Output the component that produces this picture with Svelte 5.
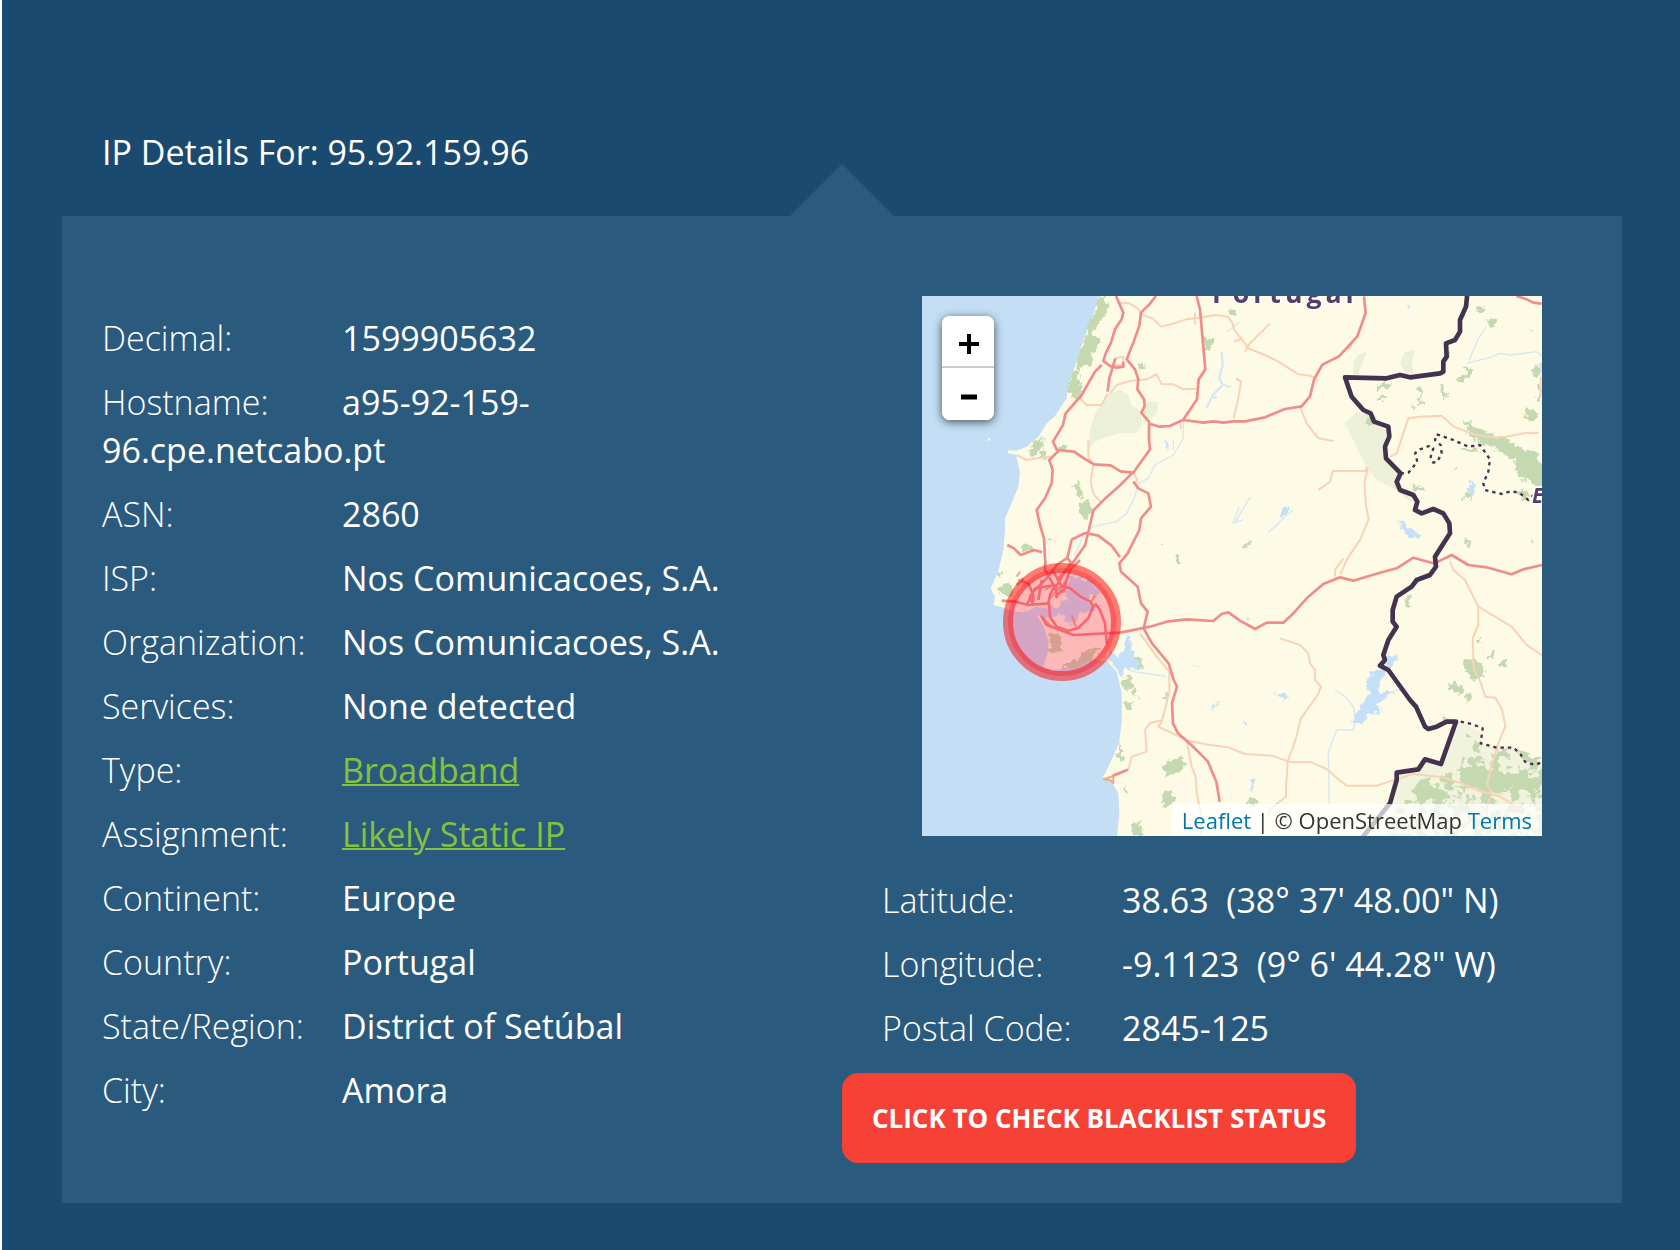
<script>
  const ip = '95.92.159.96';

  const details = [
    { label: 'Decimal', value: '1599905632' },
    { label: 'Hostname', value: 'a95-92-159-96.cpe.netcabo.pt' },
    { label: 'ASN', value: '2860' },
    { label: 'ISP', value: 'Nos Comunicacoes, S.A.' },
    { label: 'Organization', value: 'Nos Comunicacoes, S.A.' },
    { label: 'Services', value: 'None detected' },
    { label: 'Type', value: 'Broadband', href: '#broadband' },
    { label: 'Assignment', value: 'Likely Static IP', href: '#static' },
    { label: 'Continent', value: 'Europe' },
    { label: 'Country', value: 'Portugal' },
    { label: 'State/Region', value: 'District of Setúbal' },
    { label: 'City', value: 'Amora' }
  ];

  const position = [
    { label: 'Latitude', value: `38.63\u00a0 (38° 37' 48.00" N)` },
    { label: 'Longitude', value: `-9.1123\u00a0 (9° 6' 44.28" W)` },
    { label: 'Postal Code', value: '2845-125' }
  ];
</script>

{#snippet rows(items)}
  {#each items as item}
    <div class="row">
      <dt>{item.label}:</dt><dd>{#if item.href}<a href={item.href}>{item.value}</a>{:else}{item.value}{/if}</dd>
    </div>
  {/each}
{/snippet}

<main>
  <h1>IP Details For: {ip}</h1>
  <section class="panel">
    <dl class="details">{@render rows(details)}</dl>

    <div class="location">
      <div class="map">
        <svg viewBox="6 18 1860 1620" preserveAspectRatio="xMidYMid slice" role="img" aria-label="Map of Portugal">
          <defs>
            <filter id="rough" x="-5%" y="-5%" width="110%" height="110%">
              <feTurbulence type="fractalNoise" baseFrequency="0.05" numOctaves="3" seed="4" />
              <feDisplacementMap in="SourceGraphic" scale="34" xChannelSelector="R" yChannelSelector="G" />
            </filter>
            <filter id="speckle" x="-5%" y="-5%" width="110%" height="110%">
              <feTurbulence type="fractalNoise" baseFrequency="0.035" numOctaves="3" seed="9" result="n" />
              <feColorMatrix in="n" type="matrix" values="0 0 0 0 0  0 0 0 0 0  0 0 0 0 0  0 14 0 0 -7" result="m" />
              <feComposite in="SourceGraphic" in2="m" operator="in" />
            </filter>
          </defs>
          <rect class="sea" x="0" y="0" width="1880" height="1650" />
          <path class="land" d="M537 18L520 75 500 125 480 180 465 230 445 285 440 325 405 378 380 400 357 438 320 470 290 482 265 480 263 489 288 495 300 545 295 590 275 640 255 685 255 720 250 780 236 840 230 855 212 895 225 920 220 945 245 952 290 965 318 967 345 950 375 955 400 965 375 972 350 975 372 1010 385 1055 384 1085 370 1130 395 1142 440 1135 500 1110 560 1112 590 1145 605 1210 606 1290 597 1360 570 1420 548 1465 575 1475 595 1510 598 1570 590 1650H1880V0H540Z" />
          <path class="land" d="M202 445l8 1 2 5-8 1z" />

          <g class="park">
            <path d="M570 310L600 300 625 315 635 345 665 365 665 405 650 430 600 430 560 440 525 455 505 480 510 420 525 370 550 330Z" />
            <path d="M670 345l20-12 25 5-5 30-20 25-20 10z" />
            <path d="M1300 215l15-20 25-10-15 40-10 30h-15zM1440 220l15-35 30-7-10 40 5 30h-25z" />
            <path d="M1275 400L1310 365 1345 375 1360 400 1400 410 1395 470 1400 510 1440 550 1435 590 1465 620 1475 640 1430 600 1370 570 1340 530 1315 480Z" />
            <path d="M1607 1295L1640 1305 1680 1325 1690 1365 1790 1370 1810 1410 1870 1420V1650H1390L1425 1540 1430 1450 1500 1440 1515 1410 1560 1420Z" opacity=".7" />
          </g>
          <g class="forest" filter="url(#rough)">
            <path d="M537 18L555 15 562 60 540 95 525 110 520 130 540 155 525 180 510 220 490 235 465 238 480 180 500 125 520 75Z" />
            <path d="M458 245L480 235 475 270 490 290 480 325 450 325 445 285Z" />
            <path d="M850 145l30-5v30l-20 15zM925 60l22-3v18h-20zM650 225l20-8 8 15-20 8z" />
            <path d="M340 450l20-8 8 30-20 20-12-10zM320 480l20-3 10 20-15 5zM415 470l25-5-3 15-18 5zM360 485l16 2-3 14-14-2z" />
            <path d="M465 585l15-5 8 30-12 20zM475 635l20-5 22 20-5 15-15 25-20-25z" />
            <path d="M305 780l20-20 18 20-20 8zM395 745h8v10h-8zM725 755l10 3-3 10-8-2zM765 800l20 5-3 20-12-5z" />
            <path d="M230 890l30-10 20 15-5 25-35-10zM235 848l10 3-3 15-10-5z" />
            <path d="M390 1030l30 5 10 30-15 30-28-15zM430 1125l50-20 40-35 20 10-35 35-60 25zM640 1105l20-5 10 30-22 3z" />
            <path d="M608 1165l25-10 3 30-20 20zM640 1185l20 20-8 18-15-13zM608 1235l30-5-5 25-15 5zM735 1205l10 5-3 20-10-5z" />
            <path d="M725 1425l30-10 30-20 15 25-15 25-50 15zM725 1510l25-10 15 30-25 20-15-15zM610 1490l10 5-5 20zM635 1600l25-5 5 40h-30zM595 1360l12 10-3 45-10-5z" />
            <path d="M1670 45l25 10-5 15-20-10zM1705 90l20-3v25l-18-3zM1580 185l12 3-3 15-10-5zM1832 235l25-5 5 25-20 5zM1815 350l25 5 15 30-20 5-22-15zM1845 320l15-10v25l-12 5zM1855 285l10-5v25h-8z" />
            <path d="M1610 265l25-10 5-25 20 10-20 30-25 5zM1370 285l40-5-5 15-30 5zM1375 320l30-2-3 10-25 2zM1490 300l20-15-10 25 12 30-20 15 10-30zM1555 285l15 5 12 25-12 20-5-30zM1465 350l20-3-5 12z" />
            <path d="M1630 390l40 20 35 20 50 15 50 30 40 20 22 20v90l-45-35-35-10-5-50-50-30-40-15-40-20zM1615 470l50 5 15 15-55-8zM1335 382l20-5 8 20-25 8zM1475 580l25 5 10 15-30 3zM1605 530l12-5-2 15-12 3zM1640 610l15 5-5 20-15-10zM1635 740l12 5 5 20-15-5zM1780 600l45 5 15 15-30 5z" />
            <path d="M1460 920l15-8-5 30-15 5zM1630 1115l30-5 35 15-5 35-25 10-30-30zM1580 1185l25-10 25 15-3 20-20 5zM1635 1215l22-5-3 25-15 5zM1670 1045l15-5-5 20zM1705 1080l20 5-5 20-15-5zM1740 1110l20-5-5 20-15 5zM975 1535l25-10 10 15-30 8zM970 765l15-8 5 12-18 10zM1565 1280l15 3-3 15-15-5z" />
          </g>
          <path class="forest" filter="url(#speckle)" d="M1640 1330L1700 1380 1780 1375 1866 1400V1650H1400L1430 1560 1500 1470 1620 1440Z" />
          <path class="forest" filter="url(#rough)" d="M1610 1440l60-20 40 25 90 5 60 25v30l-90-10-60 15-70-20zM1480 1500l40-30 20 25 60 20-30 15-70-5z" />

          <g class="stream">
            <path d="M905 185l3 40-10 40 10 20-30 30-18 40M912 285l20 6M890 320l-10 5" class="wide" />
            <path d="M960 95l-40 30M790 395l0 50-30 50-55 30-20 40-30 15-10 40-25 50-30 25-70 15-30 25-25 60M1640 220l60-15 40-15 30 5 80-10 40 30 35 20M1648 210l25-60 25-40" />
            <path d="M958 650l-20 50 30-10M990 622l-45 75M1045 725l25-20 30-30 20-15M1390 1215l40-15 30 5M1245 1200l30 20 25 30 10 50M1305 1300l-5 20-50 0-15 40-10 25 3 160" />
            <path d="M760 450v30M590 1115l50 30 70 10 30 5M740 455v20" />
          </g>
          <g class="lake" filter="url(#rough)">
            <path d="M470 50l-25 10-8 60-30 25-80 10-20 5 70 20 45-10 25 30 20-10 5-25 30 5 25-15 20-5-50-25 40-20-15-35z" transform="translate(0 805)" />
            <path d="M560 1080l30 20 15-15 15-50 12 10 5 40 25 45 15 12-45-5-15-5-10 30-15-20-30-50z" />
            <path d="M1400 1130L1360 1150 1340 1180 1345 1210 1335 1240 1305 1280 1292 1297 1320 1300 1350 1272 1382 1265 1370 1240 1392 1222 1430 1208 1375 1202 1380 1175 1405 1140ZM1400 1090l15 10 25 5-25 20-15-5z" />
            <path d="M1440 690l30 25 30 15 2 15-35-5-20-15zM1640 590l20-20 5 30-15 25zM1860 220l10-5v40l-12-5zM1460 45l12 5-5 15zM1095 650l15 5-10 20-20 15zM1065 700l10 5-15 15zM1830 750l20 5-18 8zM1070 1210l35 5-15 20zM965 1295l20 5-5 8zM990 1470l20 5-15 25zM1825 115l15 3-8 8zM735 452l12 2-4 30zM365 440l10 5-5 15zM985 970l5 20-8-5zM885 1235l15 5-25 25zM820 1125l15 3-10 8zM1275 405l8 6-8 6z" />
          </g>

          <g class="minor">
            <path d="M598 38l30 2 25 15 15 20 30 10 25 25 40-10 35-12 30-3 60-10 35 5 15 20 5 20 20 25M825 68v35M942 155l22-8" />
            <path d="M570 310l20-25 40-12 50-5 30-15 15 30 35 0 30 15 40-2M470 315l30 30 45 0 18-35M830 280l25-35" />
            <path d="M290 495l30 15 30-5 40-5M505 450v50l15 25-8 50 8 35 20 25M585 205l25-5v25h-25M640 550l12 20-8 15M782 400v18" />
            <path d="M960 140l25 35 50 20 40 20 60 38 40 5 20 15M975 185l15-25 60-60M1140 350l20 50 35 45 45 8M1285 180l20-35M948 265l15 10-10 60-12 50M1195 600l35-25 8-32 100 0 0-10 5 5-10 40 5 70 8 40-25 60-40 60-20 45M1410 500l20-10 20-60 15-45 35-5 65-3 35 32 50 20 50 12 55 0 60-12h40M1862 260v60" />
            <path d="M1590 815l10 25 35 30 20 40 20 40 100 60 45 55 46 30M1675 950l0 55-17 40 3 90 20 40 15 45 30 3 20 35 10 50-20 50-25 80-10 45 15 25-15 40v40M1245 860l0-20 25-35M1080 1045l60 20 25 25 5 30 15 20 0 30 18 20-10 25-50 70-15 60-25 70-5 80 0 25-45 35-10 25" />
            <path d="M805 1352l60 12 60 8 50 20 80 5 60 20h60l45 20 40 35 20 15h90l110-35 90 10 60 20 45 20 60 15 65 38" />
            <path d="M660 1030l50 70 38 45 0 60-15 60-8 30-10 15 85 40 15 80 12 30 3 50 15 70-3 70M725 1290l-35 10-15 20 5 65-45 15-10 40" />
          </g>
          <path class="shrine" d="M625 1438l-45 20-30 10 20 2 10 9v-20M300 845l-10 15M375 900l25-15 20 15 15-25 0 30-15 0 0-15-30 35M360 975l40 40M455 975l15 40M515 935l10-20" />

          <g class="major">
            <path d="M588 18l22 50-5 20-20 30-12 40-15 30-8 25 20 15 20 5 20-3V215M708 18l-20 25-25 25-5 40-18 50-20 50 25 30 10 30-3 30 20 30 2 20-10 20 25 30" />
            <path d="M830 18l10 40 8 90 8 90-20 30-5 60-20 30-22 32-40 18-30 2-35-10M790 390l60 8 30-4 30 4 30-4h35l60-12 60-25 50-8 25-30 12-50 25-45 50-25 55-60 25-70-5-50M586 205l-18 60-5 40M545 225l-20 20-40 70-48 55-8 35-30 50 14 30-25 25 10 30-3 40-20 45-25 35 10 45 12 40 3 60 2 20" />
            <path d="M412 480l50 5 30 20 30 18 50 3 30 18 38 4 50-70-3-30 0-46M638 548l-40 40-40 35-38 38-15 65-10 40-35 50-45 50M640 575l15 20 30 15 8 40-30 35-5 35-35 70-25 30 5 25 50 45 10 50 20 25-12 50 25 45 50 60 15 50 10 20-15 50 3 60 15 30 40 35 50 50 25 60 10 60" />
            <path d="M262 765l20 10 20 20 40-15 25 7M600 802l-25-35-40-30-40-8-40 20-13 55 15 20M375 820v20l20 35 15 30 0 20M440 805l-30 20-30 40-40 40-20 40M455 815l-20 30-30 50M480 810l-30 30-20 60-25 20" />
            <path d="M245 932l40 3 40 10 60-5 5-25 15-30-60 10-15 25 10 25M295 870l30 10 15 35 0 20M365 870l-10 60M290 885l20-20M387 940l3 40 20 30 35 12 30-8 30-30 15-35-10-15-30-15-30-25-25-5-25-45M525 940l15 20 15 40 5 60M1790 18l30 10 20 10 25 3M578 1457l45-18" />
            <path d="M365 980L380 1005 460 1035 600 1028 690 1010 740 995 800 988 880 993 905 972 925 967 960 992 1005 1017 1040 998 1090 998 1120 970 1160 925 1210 882 1260 862 1300 872 1380 848 1430 835 1480 803 1540 820 1560 812 1595 795 1645 825 1700 832 1775 853 1810 838 1866 825" />
          </g>

          <g class="border">
            <path d="M1642 10L1638 50 1620 90 1620 125 1605 150 1578 160 1580 200 1570 215 1570 245 1560 250 1470 262 1440 255 1400 265 1275 262 1295 320 1330 360 1352 370 1362 395 1405 410 1408 440 1395 470 1398 505 1442 550 1430 575 1440 600 1480 615 1492 635 1485 660 1505 670 1540 657 1570 670 1588 700 1590 730 1545 800 1548 830 1530 855 1490 870 1475 890 1430 920 1418 960 1418 995 1430 1010 1405 1050 1390 1095 1395 1110 1380 1127 1405 1140 1470 1230 1488 1250 1515 1310 1525 1317 1550 1310 1580 1295 1608 1295 1563 1422 1515 1408 1495 1438 1430 1448 1430 1470 1410 1540 1325 1645" />
            <path class="province" d="M1442 550L1465 548 1480 530 1492 515 1485 490 1500 478 1530 467 1540 475 1532 500 1540 518 1552 515 1565 490 1562 465 1545 450 1550 433 1600 450 1645 470 1680 465 1710 508 1705 545 1690 580 1695 600 1745 612 1775 603 1800 610 1825 630 1840 615M1622 1295L1655 1302 1688 1315 1682 1360 1730 1373 1780 1373 1800 1390 1815 1415 1845 1425 1870 1415" />
          </g>
          <text class="country" x="876" y="40">Portugal</text>
          <text class="region" x="1836" y="640">E</text>
          <circle class="accuracy" cx="426" cy="996" r="162" />
        </svg>
        <div class="zoom">
          <button type="button" aria-label="Zoom in"><svg viewBox="0 0 20 20"><path d="M10 0V20M0 10H20" /></svg></button>
          <button type="button" aria-label="Zoom out"><svg viewBox="0 0 20 20"><path d="M2 10H18" class="thick" /></svg></button>
        </div>
        <p class="credit"><a href="#leaflet">Leaflet</a> | © OpenStreetMap <a href="#terms">Terms</a></p>
      </div>
      <dl class="position">{@render rows(position)}</dl>
      <button type="button" class="check">CLICK TO CHECK BLACKLIST STATUS</button>
    </div>
  </section>
</main>

<style>
  :global(body) {
    background: #fff;
  }
  main {
    box-sizing: border-box;
    min-height: 100vh;
    margin-left: 2px;
    padding: 128px 58px 48px 60px;
    background: #1b4a70;
    color: #fff;
    font: 400 34px/48px 'Open Sans', 'Noto Sans', sans-serif;
  }
  h1 {
    margin: 0 0 40px;
    padding-left: 40px;
    font: inherit;
  }
  .panel {
    position: relative;
    display: grid;
    grid-template-columns: 1fr 1fr;
    padding: 80px 40px 40px;
    background: #2a5a7e;
  }
  .panel::before {
    content: '';
    position: absolute;
    bottom: 100%;
    left: 50%;
    margin-left: -52px;
    border: 52px solid transparent;
    border-top: 0;
    border-bottom-color: #2a5a7e;
  }
  dl,
  dd,
  p {
    margin: 0;
  }
  .details {
    padding: 18px 40px 0 0;
  }
  .row + .row {
    margin-top: 16px;
  }
  dt {
    display: inline-block;
    width: 240px;
    font-weight: 300;
  }
  dd {
    display: inline;
    font-weight: 500;
  }
  dd a {
    color: #84c141;
    text-decoration-thickness: 2px;
  }
  .map {
    position: relative;
    height: 540px;
    margin: 0 40px 40px 80px;
    overflow: hidden;
  }
  .map > svg {
    display: block;
    width: 100%;
    height: 100%;
  }
  .sea {
    fill: #c4dff5;
  }
  .land {
    fill: #fdfae6;
  }
  .park {
    fill: #edf0d8;
  }
  .forest {
    fill: #c5d9b0;
  }
  .lake {
    fill: #c4e0f8;
  }
  .stream,
  .minor,
  .major,
  .shrine,
  .border {
    fill: none;
    stroke-linejoin: round;
  }
  .stream {
    stroke: #d5e8f2;
    stroke-width: 4;
  }
  .wide {
    stroke-width: 7;
  }
  .minor {
    stroke: #f8d3b8;
    stroke-width: 6;
  }
  .shrine {
    stroke: #f0ab8c;
    stroke-width: 6;
  }
  .major {
    stroke: #f08c8a;
    stroke-width: 8;
  }
  .border {
    stroke: #44324f;
    stroke-width: 14;
  }
  .province {
    stroke-width: 7;
    stroke-dasharray: 10 12;
  }
  .country,
  .region {
    fill: #51406a;
    stroke: #fff;
    stroke-width: 10;
    paint-order: stroke;
    font-weight: 700;
  }
  .country {
    font-size: 80px;
    letter-spacing: 12px;
  }
  .region {
    font-size: 63px;
    font-style: italic;
  }
  .accuracy {
    fill: #f03;
    fill-opacity: 0.26;
    stroke: #f00;
    stroke-opacity: 0.5;
    stroke-width: 30;
  }
  .zoom {
    position: absolute;
    top: 20px;
    left: 20px;
    width: 52px;
    overflow: hidden;
    border-radius: 8px;
    background: #fff;
    box-shadow: 0 2px 10px rgb(0 0 0 / 65%);
  }
  .zoom button {
    display: grid;
    place-items: center;
    width: 100%;
    height: 52px;
    padding: 6px 0 0 2px;
    border: 0;
    background: #fff;
  }
  .zoom button:first-child {
    border-bottom: 2px solid #ccc;
  }
  .zoom svg {
    width: 20px;
    height: 20px;
    stroke: #000;
    stroke-width: 4;
  }
  .thick {
    stroke-width: 5;
  }
  .credit {
    position: absolute;
    right: 0;
    bottom: 0;
    padding: 0 10px;
    background: rgb(255 255 255 / 70%);
    color: #333;
    font-size: 22px;
    line-height: 32px;
  }
  .credit a {
    color: #0078a8;
    text-decoration: none;
  }
  .position {
    padding-left: 40px;
  }
  .check {
    display: block;
    margin-top: 21px;
    padding: 21px 30px;
    border: 0;
    border-radius: 16px;
    background: #f64137;
    color: #fff;
    font: 700 26px/48px 'Open Sans', 'Noto Sans', sans-serif;
  }
</style>
